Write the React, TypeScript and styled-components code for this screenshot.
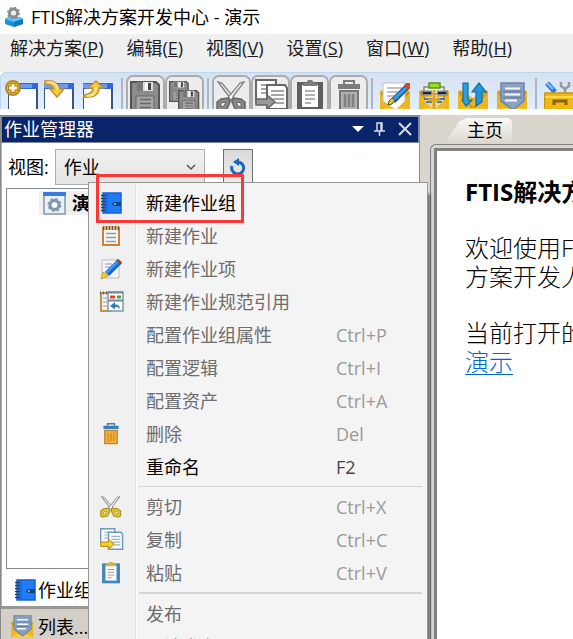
import React from "react";
import styled, { createGlobalStyle, css } from "styled-components";

const Global = createGlobalStyle`
  *, *::before, *::after { box-sizing: border-box; }
  body { margin: 0; background: #fff; }
  body, button, select {
    font-family: "Open Sans", "Noto Sans CJK SC", sans-serif;
    font-size: 18px;
    line-height: 24px;
    color: #000;
  }
  button { margin: 0; padding: 0; border: 0; background: none; text-align: left; }
`;

const Window = styled.div`
  position: relative;
  display: flex;
  flex-direction: column;
  height: 100vh;
  overflow: hidden;
  white-space: nowrap;
`;

const TitleBar = styled.header`
  display: flex;
  align-items: center;
  flex: none;
  gap: 7px;
  height: 34px;
  padding-left: 4px;
  background: #fff;
`;

const MenuBar = styled.nav`
  display: flex;
  flex: none;
  gap: 23px;
  height: 38px;
  padding: 2px 10px 0;
  background: #efefef;
`;

const MenuButton = styled.button`
  height: 24px;
  color: #1c1c1c;
  flex: none;
`;

const ToolBar = styled.div`
  display: flex;
  flex: none;
  height: 37px;
  padding: 2px 0 0;
  overflow: hidden;
  border-top: 1px solid #bcd8f0;
  border-left: 1px solid #bcd8f0;
  border-radius: 6px 0 0 0;
  background: linear-gradient(#d6e1f1, #e1effc);
`;

const Tool = styled.button<{ $off?: boolean }>`
  flex: none;
  width: 39px;
  height: 40px;
  padding: 4px 4px 0;
  svg { display: block; }
  ${(p) =>
    p.$off &&
    css`
      padding: 2px 2px 0;
      border: 2px solid #acacb0;
      border-radius: 7px;
      background: #ececec;
    `}
`;

const ToolRule = styled.span`
  flex: none;
  width: 2px;
  margin: 3px 3px 0;
  background: #b0b6c0;
`;

const Workspace = styled.main`
  display: flex;
  flex: 1;
  min-height: 0;
  margin-top: 6px;
  background: #d9d5cd;
`;

const Dock = styled.section`
  display: flex;
  flex-direction: column;
  flex: none;
  width: 420px;
  border: solid #8c8c8c;
  border-width: 1px 1px 0;
`;

const DockHeader = styled.div`
  display: flex;
  align-items: center;
  flex: none;
  gap: 9px;
  height: 27px;
  padding: 0 5px 2px 2px;
  background: #0a246a;
  border: 1px solid #7d88a5;
`;

const DockTitle = styled.h2`
  flex: 1;
  margin: 0;
  font-size: 18px;
  font-weight: 400;
  color: #fff;
`;

const HeaderButton = styled.button`
  display: flex;
  svg { display: block; }
`;

const DockBody = styled.div`
  display: flex;
  flex-direction: column;
  flex: 1;
  min-height: 0;
  padding: 6px 4px 0;
  background: #fff;
  border-left: 1px solid #b0b0b0;
`;

const ViewRow = styled.div`
  display: flex;
  align-items: center;
  flex: none;
  height: 36px;
  padding-left: 2px;
`;

const SelectBox = styled.div`
  display: grid;
  align-items: center;
  width: 150px;
  height: 36px;
  margin: 0 18px 0 6px;
  > * { grid-area: 1 / 1; }
  > svg { justify-self: end; margin-right: 8px; pointer-events: none; }
`;

const ViewSelect = styled.select`
  appearance: none;
  width: 100%;
  height: 100%;
  padding: 0 8px;
  border: 1px solid #acacac;
  border-radius: 0;
  background: linear-gradient(#f0f0f0, #e4e4e4);
`;

const Refresh = styled.button`
  display: flex;
  justify-content: center;
  align-items: center;
  width: 30px;
  height: 36px;
  border: 1px solid #707070;
  background: linear-gradient(#d9d9d9, #ececec);
`;

const Tree = styled.div`
  flex: 1;
  min-height: 0;
  margin-top: 3px;
  border: 1px solid #828790;
`;

const TreeNode = styled.button`
  display: flex;
  align-items: center;
  gap: 6px;
  height: 24px;
  margin: 2px 0 0 32px;
  padding-left: 4px;
  background: #f0f0f0;
  font-weight: 700;
`;

const TypeRow = styled.button`
  display: flex;
  align-items: center;
  flex: none;
  gap: 2px;
  height: 37px;
  padding: 4px 0 0 8px;
`;

const DockTab = styled.button`
  display: flex;
  align-items: center;
  flex: none;
  gap: 4px;
  height: 33px;
  padding: 5px 0 0 10px;
  border-top: 3px solid #9a9894;
  background: #d4d0c8;
`;

const Documents = styled.section`
  display: flex;
  flex-direction: column;
  flex: 1;
  min-width: 0;
  margin-left: 10px;
`;

const TabStrip = styled.div`
  display: flex;
  flex: none;
  height: 29px;
  padding: 3px 0 0 12px;
`;

const DocTab = styled.button`
  width: 70px;
  padding: 0 9px 4px 25px;
  border-radius: 0 5px 0 0;
  background: linear-gradient(#fbfaf8, #d9d5cd);
  clip-path: polygon(0 100%, 4px 88%, 17px 14%, 25px 0, 100% 0, 100% 100%);
`;

const Frame = styled.div`
  display: flex;
  flex: 1;
  min-height: 0;
  padding: 3px 0 0 3px;
  border: solid #808080;
  border-width: 1px 0 0 1px;
  border-radius: 6px 0 0 0;
`;

const Page = styled.article`
  flex: 1;
  min-width: 0;
  padding: 26px 0 0 28px;
  overflow: hidden;
  border: solid #808080;
  border-width: 3px 0 0 3px;
  background: #fff;
  font-size: 24px;
  font-weight: 300;
  line-height: 29px;
  h1 { margin: 0; font-size: 24px; line-height: 29px; }
  p { margin: 27px 0 0; }
  a { color: #0066cc; text-underline-offset: 3px; text-decoration-thickness: 1px; }
`;

const ContextMenu = styled.div`
  position: absolute;
  left: 88px;
  top: 182px;
  width: 340px;
  padding: 3px 3px 0;
  border: 1px solid #979797;
  background: linear-gradient(90deg, #f4f4f4 3px, #f0f0f0 3px 46px, #dfdfdf 46px 47px, #fff 47px 48px, #f4f4f4 48px);
  box-shadow: 4px 10px 3px -2px rgba(0, 0, 0, 0.55);
`;

const MenuItem = styled.button`
  display: grid;
  grid-template-columns: 34px 190px 1fr;
  align-items: center;
  width: 100%;
  height: 33px;
  padding-left: 8px;
  color: #000;
  &:disabled { color: #6d6d6d; }
  svg { display: block; }
`;

const Label = styled.span`
  padding-left: 12px;
`;

const Shortcut = styled.kbd`
  padding-left: 12px;
  font-family: inherit;
  color: #444;
  ${MenuItem}:disabled & { color: #9a9a9a; }
`;

const MenuRule = styled.hr<{ $thick?: boolean }>`
  height: ${(p) => (p.$thick ? 2 : 1)}px;
  margin: 3px 2px 3px 47px;
  border: 0;
  background: #d4d4d4;
`;

const Highlight = styled.div`
  position: absolute;
  left: 96px;
  top: 174px;
  width: 148px;
  height: 49px;
  border: 3px solid #fb3838;
  pointer-events: none;
`;

type SvgProps = { size: number; view?: number; children: React.ReactNode };
const Svg = ({ size, view, children }: SvgProps) => (
  <svg width={size} height={size} viewBox={`0 0 ${view ?? size} ${view ?? size}`} fill="none" aria-hidden="true">
    {children}
  </svg>
);

const AppIcon = () => (
  <Svg size={20}>
    <path d="M1 12l3-2h12l3 2v5l-9 3-9-3z" fill="#1594dc" />
    <path d="M1 12l3-2h12l3 2-9 3z" fill="#5ec6f6" />
    <path d="M10 15v5l9-3v-5z" fill="#0c78c4" />
    <circle cx="9.500" cy="6" r="4" stroke="#8b8e90" strokeWidth="3" />
    <circle cx="9.500" cy="6" r="5.500" stroke="#8b8e90" strokeWidth="2" strokeDasharray="2 2.300" />
    <circle cx="9.500" cy="6" r="2" fill="#e9eef0" />
  </Svg>
);

const WindowShape = () => (
  <>
    <path d="M0 3H30V34H0z" fill="#3c5878" />
    <path d="M0 3H30V9H0z" fill="#3468d8" />
    <path d="M0 4H24V8H0z" fill="#6a9cf4" />
    <path d="M1 9H28V29H1z" fill="#fff" />
  </>
);

const NewIcon = () => (
  <svg width="33" height="34" viewBox="-3 0 33 34" fill="none" aria-hidden="true">
    <WindowShape />
    <circle cx="5" cy="8" r="7" fill="#f5b921" stroke="#b48a30" strokeWidth="2" />
    <path d="M5 3v10M0 8h10" stroke="#a87c20" strokeWidth="5" />
    <path d="M5 4v8M1 8h8" stroke="#fff8dc" strokeWidth="3" />
  </svg>
);

const ImportIcon = () => (
  <Svg size={34}>
    <WindowShape />
    <path d="M1 1c8-1 13 2 14 8h5l-7 8-7-8h4C9 6 6 4 1 4z" fill="#fbc93c" stroke="#c09438" strokeWidth="1.500" />
    <path d="M3 2c7 0 10 2 11 8" stroke="#ffe894" strokeWidth="2" />
  </Svg>
);

const ExportIcon = () => (
  <Svg size={34}>
    <WindowShape />
    <path d="M1 17c8 1 15-1 15-9h4L13 1 5 8h5c0 4-3 6-9 7z" fill="#fbc93c" stroke="#c09438" strokeWidth="1.500" />
    <path d="M4 16c7 0 9-3 9-9" stroke="#ffe894" strokeWidth="2" />
  </Svg>
);

const FloppyShape = () => (
  <>
    <path d="M1 1h25l3 3v27H1z" fill="#8c8c8c" stroke="#555" strokeWidth="2" />
    <path d="M7 1h16v9H7z" fill="#ddd" />
    <path d="M7 1h6v9H7z" fill="#777" />
    <path d="M15 2h3v7h-3z" fill="#fff" />
    <path d="M18 2h3v7h-3z" fill="#444" />
    <path d="M6 15h18v15H6z" fill="#a4a4a4" stroke="#666" />
    <path d="M10 18.500h11M10 22.500h11M10 26.500h11" stroke="#666" strokeWidth="1.500" />
  </>
);

const SaveIcon = () => (
  <Svg size={31}>
    <FloppyShape />
  </Svg>
);

const SaveAllIcon = () => (
  <Svg size={31}>
    <g transform="scale(.66)">
      <FloppyShape />
    </g>
    <g transform="translate(9 9) scale(.71)">
      <FloppyShape />
    </g>
  </Svg>
);

const ScissorShape = ({ handle, edge }: { handle: string; edge: string }) => (
  <>
    <path d="M2 1l4 1 14 17-3 2z" fill="#ddd" stroke="#858585" strokeWidth="1.300" />
    <path d="M28 1l-4 1-14 17 3 2z" fill="#eee" stroke="#858585" strokeWidth="1.300" />
    <path d="M13 17l1 4-3 7-7 2-3-2v-7l4-3z" fill={handle} stroke={edge} strokeWidth="1.500" />
    <path d="M17 17l-1 4 3 7 7 2 3-2v-7l-4-3z" fill={handle} stroke={edge} strokeWidth="1.500" />
    <path d="M10 21l-2 4-3 1v-4zM20 21l2 4 3 1v-4z" fill="#eee" stroke={edge} />
    <circle cx="15" cy="16" r="1.500" fill="#fff" />
  </>
);

const CopyShape = ({ edge, line, arrow, arrowEdge }: { edge: string; line: string; arrow: string; arrowEdge: string }) => (
  <>
    <path d="M1 1h20v22H1z" fill="#fcfcfc" stroke={edge} strokeWidth="2" />
    <path d="M6 6h11M6 10h8M6 14h8" stroke={line} strokeWidth="1.500" />
    <path d="M12 6h18l2 3v21H12z" fill="#fcfcfc" stroke={edge} strokeWidth="2" />
    <path d="M16 12h13M16 16h13M18 20h11M20 24h9" stroke={line} strokeWidth="1.700" />
    <path d="M1 20h11v-4l8 7-8 7v-4H1z" fill={arrow} stroke={arrowEdge} strokeWidth="1.500" />
  </>
);

const ClipboardShape = ({ board, clip }: { board: string; clip: string }) => (
  <>
    <path d="M3 2h26v29H3z" fill={board} />
    <path d="M8 5h16v22H8z" fill="#fff" />
    <path d="M9 6V3h3l2-3h4l2 3h3v3z" fill={clip} />
    <path d="M11 11h10M11 15h10M11 19h10M11 23h6" stroke="#999" strokeWidth="1.500" />
  </>
);

const TrashShape = ({ lid, body, edge, line }: { lid: string; body: string; edge: string; line: string }) => (
  <>
    <path d="M11 4V1h10v3" stroke={lid} strokeWidth="2" />
    <path d="M5 4h22v5H5z" fill={lid} />
    <path d="M7 11h18v19H7z" fill={body} stroke={edge} strokeWidth="2" />
    <path d="M12 14v13M16 14v13M20 14v13" stroke={line} strokeWidth="2.500" />
  </>
);

const Tray = () => (
  <>
    <path d="M0 9l3-1 12 8 12-8 3 1v22H0z" fill="#edb61c" />
    <path d="M1 10l14 17 14-17" stroke="#ca951a" strokeWidth="2" />
    <path d="M0 31l5-5h20l5 5z" fill="#f9cc38" />
  </>
);

const EditTrayIcon = () => (
  <Svg size={31}>
    <Tray />
    <path d="M3 1h22v18l-9 9-13-9z" fill="#fff" stroke="#b9bec6" />
    <path d="M7 6h15M7 10h11M7 14h8" stroke="#a9adb5" strokeWidth="1.500" />
    <path d="M28 4L13 19" stroke="#1c5b9c" strokeWidth="6" />
    <path d="M27 5L13 18" stroke="#34a0ea" strokeWidth="3" />
    <path d="M26 1h4v5l-2 2-4-4z" fill="#d84818" />
    <path d="M15 18l-3 4-4 1 1-4 3-3z" fill="#e4c234" stroke="#55502a" />
  </Svg>
);

const PrintTrayIcon = () => (
  <Svg size={31}>
    <Tray />
    <path d="M6 15h18v5l-9 8-9-8z" fill="#f4d690" />
    <path d="M5 5h20v7H5z" fill="#eee" stroke="#888" strokeWidth="1.500" />
    <path d="M10 1h11v5H10z" fill="#9be01c" stroke="#579321" strokeWidth="1.500" />
    <path d="M2 11h11M18 11h11" stroke="#888" strokeWidth="5" />
    <path d="M4 11h8M19 11h8" stroke="#222" strokeWidth="2" />
    <path d="M5 17h8M18 17h8M7 20h6M18 20h5" stroke="#3d78c4" strokeWidth="2" />
    <path d="M15 8v20M9 18h12" stroke="#e0a51c" strokeWidth="3" />
  </Svg>
);

const SyncTrayIcon = () => (
  <Svg size={31}>
    <Tray />
    <path d="M5 1h5v17h4l-6 6-4-6h1z" fill="#2e9fdf" stroke="#166b9f" strokeWidth="1.200" />
    <path d="M18 24V10h-4l7-9 7 9h-4v10z" fill="#1d98df" stroke="#166b9f" strokeWidth="1.200" />
  </Svg>
);

const ListTrayShape = () => (
  <>
    <Tray />
    <path d="M4 1h23v18l-11 9L4 19z" fill="#8ba2c5" stroke="#6d83a6" strokeWidth="1.500" />
    <path d="M8 6.500h15M8 12.500h15M8 18.500h12" stroke="#f4f8ff" strokeWidth="2" />
    <path d="M6 9.500h19M6 15.500h19" stroke="#6a7f9f" strokeWidth="1.500" />
  </>
);

const ToolboxIcon = () => (
  <Svg size={31}>
    <path d="M3 1l8 9" stroke="#2d7ce0" strokeWidth="5" />
    <path d="M3 1l6 6" stroke="#88c1ff" strokeWidth="2" />
    <path d="M17 0v4l4 3 4-3V0M21 6v6" stroke="#999" strokeWidth="2.500" />
    <path d="M1 11h30v20H0z" fill="#f1b811" stroke="#cb9410" strokeWidth="1.500" />
    <path d="M1 15h30" stroke="#ffda57" strokeWidth="2" />
    <path d="M10 23v-4h12v4" stroke="#886318" strokeWidth="3" />
  </Svg>
);

const NotebookIcon = () => (
  <Svg size={22}>
    <path d="M3 1h18v20H3z" fill="#237af5" stroke="#1462d3" strokeWidth="1.500" />
    <path d="M7 1v20" stroke="#1462d3" />
    <path d="M1 3.500h5M1 6.500h5M1 9.500h5M1 12.500h5M1 15.500h5M1 18.500h5" stroke="#29435e" strokeWidth="1.500" />
    <path d="M14 10h7v4h-7l-2-2z" fill="#11427e" />
    <circle cx="15" cy="12" r="1" fill="#8bc5ff" />
  </Svg>
);

const NotepadIcon = () => (
  <Svg size={22}>
    <path d="M3 3h16v17H3z" fill="#f8f8f8" stroke="#c6853a" strokeWidth="2" />
    <path d="M3 3h16" stroke="#d9a968" strokeWidth="4" />
    <path d="M3 3h16" stroke="#665a48" strokeWidth="4" strokeDasharray="1 2" />
    <path d="M6 8.500h10M6 12.500h10M6 16.500h10" stroke="#999" strokeWidth="1.500" />
  </Svg>
);

const PencilIcon = () => (
  <Svg size={22}>
    <path d="M2 2h17v18H2z" fill="#f6f6f8" stroke="#b9bdc7" />
    <path d="M5 6h7M5 9h5" stroke="#b2b7c4" strokeWidth="1.500" />
    <path d="M20 3L7 16" stroke="#1f62c0" strokeWidth="6" />
    <path d="M18 3L6 15" stroke="#3f96fa" strokeWidth="3" />
    <path d="M18 1l4 3-2 2-4-3z" fill="#92513a" />
    <path d="M3 14l5 4-7 3z" fill="#f8d51c" stroke="#cba719" />
  </Svg>
);

const ReferenceIcon = () => (
  <svg width="25" height="24" viewBox="1 0 25 24" fill="none" aria-hidden="true">
    <path d="M2 3h10v18H2z" fill="#f4f4f4" stroke="#c8904e" strokeWidth="2" />
    <path d="M1 3h10" stroke="#665a48" strokeWidth="3" strokeDasharray="1 2" />
    <path d="M4 8h4M4 12h4M4 16h4" stroke="#999" />
    <path d="M9 2h15v19H9z" fill="#fff" stroke="#8292a7" strokeWidth="1.500" />
    <path d="M9 2.500h15M9 10.500h15" stroke="#71869f" strokeWidth="2" />
    <path d="M11 7h5" stroke="#d44a31" strokeWidth="3" />
    <path d="M18 7h4" stroke="#59a438" strokeWidth="3" />
    <path d="M11 16l5-4v2.500c4 0 5 2 5 5-1-2-2-2.500-5-2.500v2.500z" fill="#287dc0" />
  </svg>
);

const GearWindowIcon = () => (
  <Svg size={23}>
    <path d="M1 1h21v21H1z" fill="#e8f0f8" stroke="#8396ad" strokeWidth="1.500" />
    <path d="M0 0h23v4H0z" fill="#3b78df" />
    <circle cx="11.500" cy="13" r="4.500" stroke="#8296ad" strokeWidth="3" />
    <circle cx="11.500" cy="13" r="6" stroke="#8296ad" strokeWidth="2" strokeDasharray="2.400 2.300" />
    <circle cx="11.500" cy="13" r="2" fill="#fff" />
  </Svg>
);

const RefreshIcon = () => (
  <Svg size={18}>
    <path d="M3 8a6 6 0 1 0 6-4" stroke="#1467b9" strokeWidth="3" />
    <path d="M10 0v8L4 4z" fill="#1467b9" />
  </Svg>
);

const ITEMS: { label?: string; keys?: string; icon?: React.ReactNode; on?: boolean; thick?: boolean }[] = [
  { label: "新建作业组", icon: <NotebookIcon />, on: true },
  { label: "新建作业", icon: <NotepadIcon /> },
  { label: "新建作业项", icon: <PencilIcon /> },
  { label: "新建作业规范引用", icon: <ReferenceIcon /> },
  { label: "配置作业组属性", keys: "Ctrl+P" },
  { label: "配置逻辑", keys: "Ctrl+I" },
  { label: "配置资产", keys: "Ctrl+A" },
  {
    label: "删除",
    keys: "Del",
    icon: (
      <Svg size={22} view={32}>
        <TrashShape lid="#3b7eb5" body="#f4b63c" edge="#c08234" line="#dc9220" />
      </Svg>
    ),
  },
  { label: "重命名", keys: "F2", on: true },
  {},
  {
    label: "剪切",
    keys: "Ctrl+X",
    icon: (
      <Svg size={22} view={31}>
        <ScissorShape handle="#e8c52d" edge="#a88d20" />
      </Svg>
    ),
  },
  {
    label: "复制",
    keys: "Ctrl+C",
    icon: (
      <Svg size={24} view={34}>
        <CopyShape edge="#6d99c5" line="#9fb2c5" arrow="#f6d32c" arrowEdge="#bb981f" />
      </Svg>
    ),
  },
  {
    label: "粘贴",
    keys: "Ctrl+V",
    icon: (
      <Svg size={22} view={32}>
        <ClipboardShape board="#4585b8" clip="#d6b44b" />
      </Svg>
    ),
  },
  { thick: true },
  { label: "发布" },
  { label: "取消发布" },
];

const MENUS: [string, string][] = [
  ["解决方案", "P"],
  ["编辑", "E"],
  ["视图", "V"],
  ["设置", "S"],
  ["窗口", "W"],
  ["帮助", "H"],
];

export default function App() {
  return (
    <Window>
      <Global />
      <TitleBar>
        <AppIcon />
        <span>FTIS解决方案开发中心 - 演示</span>
      </TitleBar>
      <MenuBar>
        {MENUS.map(([name, key]) => (
          <MenuButton key={key}>
            {name}(<u>{key}</u>)
          </MenuButton>
        ))}
      </MenuBar>
      <ToolBar role="toolbar">
        <Tool aria-label="新建"><NewIcon /></Tool>
        <Tool aria-label="导入"><ImportIcon /></Tool>
        <Tool aria-label="导出"><ExportIcon /></Tool>
        <ToolRule />
        <Tool $off disabled aria-label="保存"><SaveIcon /></Tool>
        <Tool $off disabled aria-label="全部保存"><SaveAllIcon /></Tool>
        <ToolRule />
        <Tool $off disabled aria-label="剪切">
          <Svg size={31}><ScissorShape handle="#888" edge="#666" /></Svg>
        </Tool>
        <Tool $off disabled aria-label="复制">
          <Svg size={34}><CopyShape edge="#666" line="#888" arrow="#999" arrowEdge="#666" /></Svg>
        </Tool>
        <Tool $off disabled aria-label="粘贴">
          <Svg size={32}><ClipboardShape board="#606060" clip="#7c7c7c" /></Svg>
        </Tool>
        <Tool $off disabled aria-label="删除">
          <Svg size={32}><TrashShape lid="#7b7b7b" body="#b0b0b0" edge="#777" line="#808080" /></Svg>
        </Tool>
        <ToolRule />
        <Tool aria-label="编辑"><EditTrayIcon /></Tool>
        <Tool aria-label="打印"><PrintTrayIcon /></Tool>
        <Tool aria-label="同步"><SyncTrayIcon /></Tool>
        <Tool aria-label="列表"><Svg size={31}><ListTrayShape /></Svg></Tool>
        <ToolRule />
        <Tool aria-label="工具"><ToolboxIcon /></Tool>
      </ToolBar>
      <Workspace>
        <Dock>
          <DockHeader>
            <DockTitle>作业管理器</DockTitle>
            <HeaderButton aria-label="选项">
              <Svg size={14}><path d="M1 4h12L7 10z" fill="#fff" /></Svg>
            </HeaderButton>
            <HeaderButton aria-label="固定">
              <Svg size={14}>
                <path d="M3 9V1h5v8M7 1v8M0 9h11M5.500 9v5" stroke="#d6dcec" strokeWidth="1.500" />
              </Svg>
            </HeaderButton>
            <HeaderButton aria-label="关闭">
              <Svg size={16}><path d="M2 2l12 12M14 2L2 14" stroke="#d6dcec" strokeWidth="2" /></Svg>
            </HeaderButton>
          </DockHeader>
          <DockBody>
            <ViewRow>
              <label htmlFor="view">视图:</label>
              <SelectBox>
                <ViewSelect id="view" defaultValue="作业">
                  <option>作业</option>
                </ViewSelect>
                <Svg size={12}><path d="M2 4l4 4 4-4" stroke="#555" strokeWidth="1.500" /></Svg>
              </SelectBox>
              <Refresh aria-label="刷新"><RefreshIcon /></Refresh>
            </ViewRow>
            <Tree>
              <TreeNode>
                <GearWindowIcon />
                演示
              </TreeNode>
            </Tree>
            <TypeRow>
              <NotebookIcon />
              作业组
            </TypeRow>
          </DockBody>
          <DockTab>
            <Svg size={23} view={31}><ListTrayShape /></Svg>
            列表...
          </DockTab>
        </Dock>
        <Documents>
          <TabStrip>
            <DocTab>主页</DocTab>
          </TabStrip>
          <Frame>
            <Page>
              <h1>FTIS解决方案</h1>
              <p>
                欢迎使用FTIS
                <br />
                方案开发人员
              </p>
              <p>
                当前打开的解
                <br />
                <a href="#demo">演示</a>
              </p>
            </Page>
          </Frame>
        </Documents>
      </Workspace>
      <ContextMenu role="menu">
        {ITEMS.map((item, i) =>
          item.label ? (
            <MenuItem key={i} role="menuitem" disabled={!item.on}>
              <span>{item.icon}</span>
              <Label>{item.label}</Label>
              {item.keys && <Shortcut>{item.keys}</Shortcut>}
            </MenuItem>
          ) : (
            <MenuRule key={i} $thick={item.thick} />
          )
        )}
      </ContextMenu>
      <Highlight />
    </Window>
  );
}
